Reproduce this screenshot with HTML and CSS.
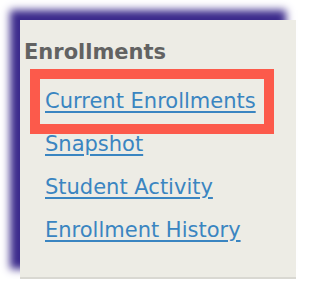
FILE: index.html
```html
<!DOCTYPE html>
<html lang="en">
<head>
<meta charset="utf-8">
<title>Enrollments</title>
<link rel="stylesheet" href="styles.css">
</head>
<body>
<div class="page">
  <nav class="panel">
    <h2 class="panel-title">Enrollments</h2>
    <ul class="links">
      <li class="link-item highlight"><a href="#">Current Enrollments</a></li>
      <li class="link-item"><a href="#">Snapshot</a></li>
      <li class="link-item"><a href="#">Student Activity</a></li>
      <li class="link-item"><a href="#">Enrollment History</a></li>
    </ul>
  </nav>
</div>
</body>
</html>
```

FILE: styles.css
```css
html, body {
  margin: 0;
  padding: 0;
  background: #ffffff;
}
body {
  font-family: "DejaVu Sans", Verdana, sans-serif;
  overflow: hidden;
}
.page {
  padding: 20px 0 0 20px;
}
.panel {
  background: #edece5;
  width: 276px;
  height: 259px;
  border-bottom: 2px solid #d9d8d2;
  box-shadow: -10px -10px 8px #3b2a8c;
  padding: 20px 0 0 4px;
  box-sizing: border-box;
}
.panel-title {
  margin: 0;
  font-size: 21px;
  font-weight: bold;
  color: #626262;
  line-height: 24px;
}
.links {
  list-style: none;
  margin: 16px 0 0 17px;
  padding: 0;
  width: 222px;
}
.link-item {
  height: 43px;
  line-height: 43px;
  padding-left: 4px;
  font-size: 21px;
  white-space: nowrap;
}
.link-item a {
  color: #3a85c1;
  text-decoration: underline;
  text-decoration-thickness: 2px;
  text-underline-offset: 3px;
}
.highlight {
  outline: 10px solid #fc5a4b;
  outline-offset: 1px;
}
```
